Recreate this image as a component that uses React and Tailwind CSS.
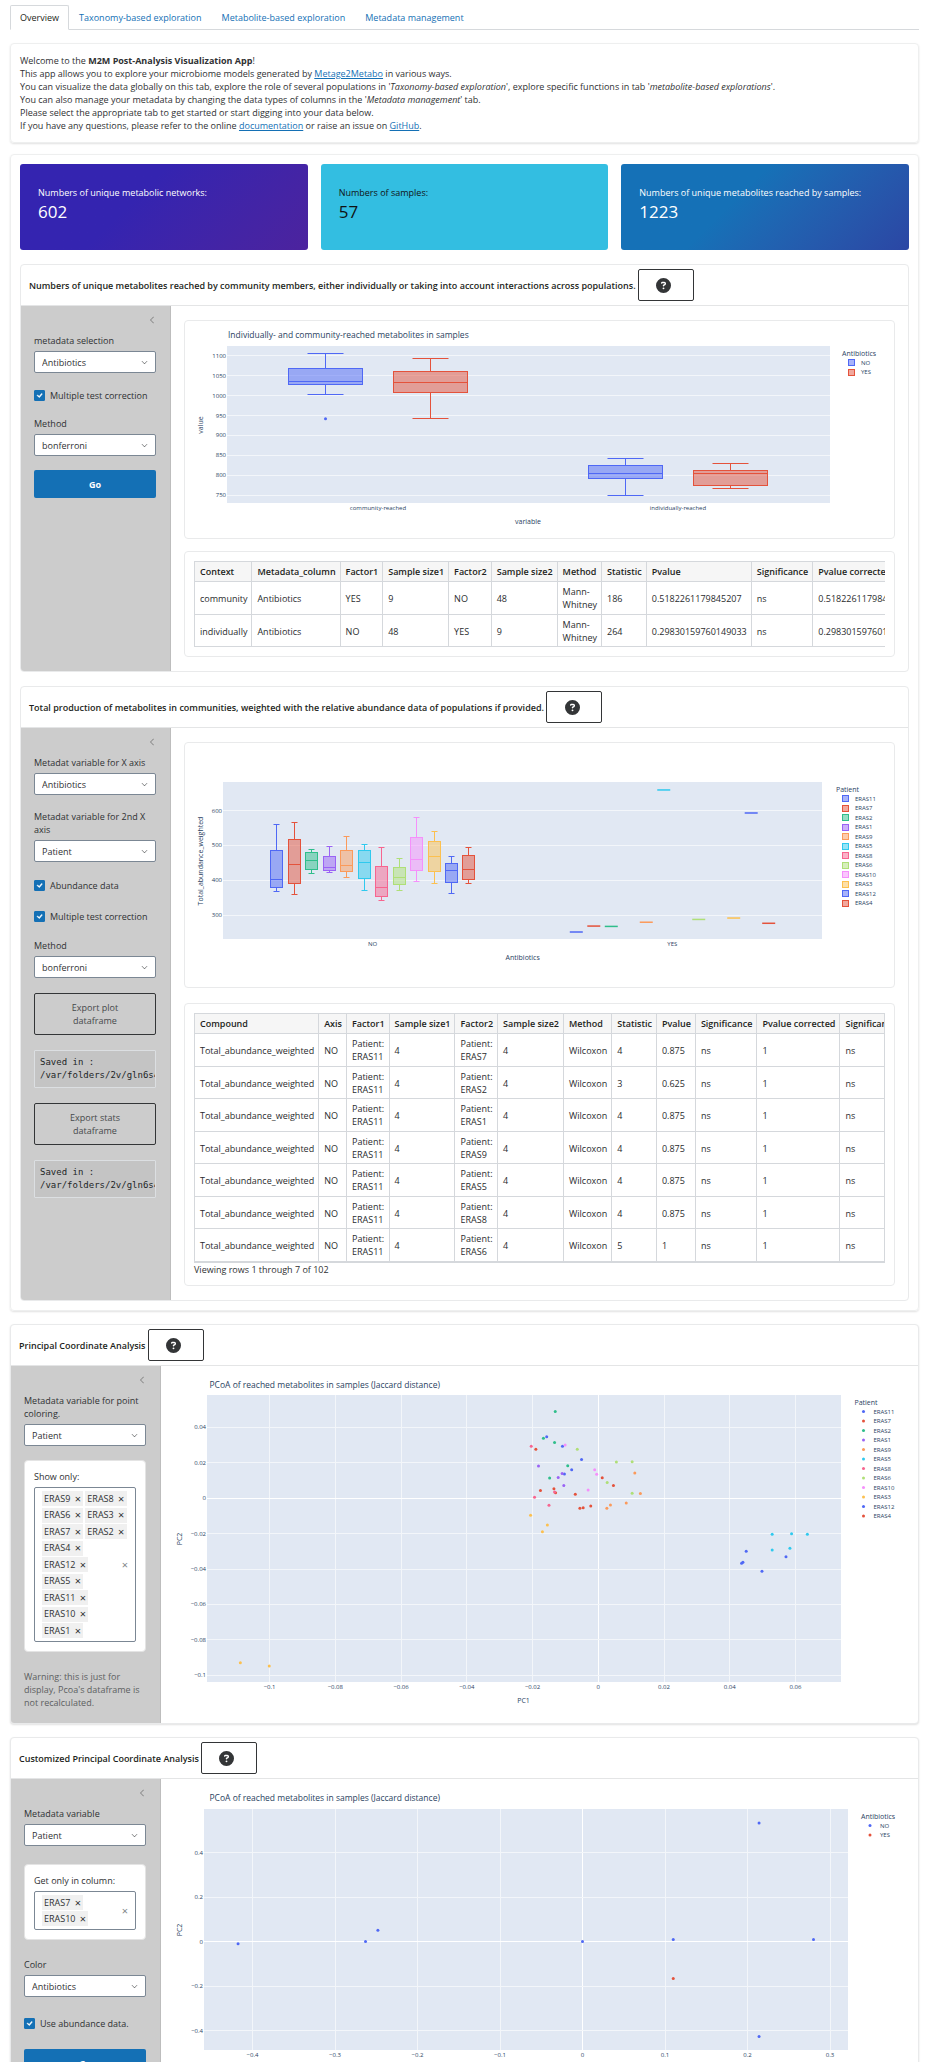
import React from "react";
import { FaCircleQuestion } from "react-icons/fa6";
import { BsChevronLeft, BsChevronDown, BsCheckLg } from "react-icons/bs";

const COLORS = {
  blue: "#4f68f5",
  red: "#e4523b",
  green: "#2fbe8b",
  purple: "#9a63f5",
  orange: "#fb9a5b",
  cyan: "#2fc9ee",
  rose: "#f7658f",
  lime: "#afdf77",
  pink: "#f590fb",
  yellow: "#fcc04f",
};

const PATIENTS = [
  ["ERAS11", COLORS.blue],
  ["ERAS7", COLORS.red],
  ["ERAS2", COLORS.green],
  ["ERAS1", COLORS.purple],
  ["ERAS9", COLORS.orange],
  ["ERAS5", COLORS.cyan],
  ["ERAS8", COLORS.rose],
  ["ERAS6", COLORS.lime],
  ["ERAS10", COLORS.pink],
  ["ERAS3", COLORS.yellow],
  ["ERAS12", COLORS.blue],
  ["ERAS4", COLORS.red],
];

const ANTIBIOTICS = [
  ["NO", COLORS.blue],
  ["YES", COLORS.red],
];

/* ---------- form controls ---------- */

function SelectField({ id, label, options }) {
  return (
    <div className="flex flex-col gap-1">
      <label htmlFor={id}>{label}</label>
      <div className="relative">
        <select
          id={id}
          className="block h-[22px] w-full appearance-none rounded-[2px] border border-[#7b8794] bg-white pl-[7px] pr-5 text-[9px] text-[#2f3133]"
        >
          {options.map((o) => (
            <option key={o}>{o}</option>
          ))}
        </select>
        <BsChevronDown className="pointer-events-none absolute right-2 top-2 size-[7px] text-[#373a3c]" />
      </div>
    </div>
  );
}

function CheckField({ label }) {
  return (
    <label className="flex h-4 items-center gap-[5px]">
      <span className="relative flex size-[11px]">
        <input
          type="checkbox"
          defaultChecked
          className="size-[11px] appearance-none rounded-[1px] border border-[#1470b5] checked:bg-[#1470b5]"
        />
        <BsCheckLg className="pointer-events-none absolute left-[2px] top-[2px] size-[7px] stroke-2 text-white" />
      </span>
      {label}
    </label>
  );
}

function GoButton() {
  return (
    <button className="h-7 w-full shrink-0 rounded-[2px] bg-[#1470b5] font-bold text-white">Go</button>
  );
}

function ExportButton({ children }) {
  return (
    <button className="w-full rounded-[2px] border border-[#333537] px-6 py-[7px] text-[#46494b]">{children}</button>
  );
}

function SavedPath() {
  return (
    <pre className="overflow-hidden rounded-[1px] border border-[#dcdfe2] bg-[#c4c4c4] px-[5px] py-[5px] font-['DejaVu_Sans_Mono','Liberation_Mono',monospace] text-[9px] leading-[13px] text-[#222426]">
      {"Saved in :\n/var/folders/2v/gln6s4w9"}
    </pre>
  );
}

function TokenBox({ label, items, tall }) {
  return (
    <div className="rounded-[4px] border border-[#e4e4e4] bg-white p-[9px]" role="group" aria-label={label}>
      <div className="mb-1">{label}</div>
      <div
        className={
          "relative flex flex-wrap content-between gap-x-[2px] gap-y-px rounded-[2px] border border-[#7b8794] py-[3px] pl-[7px] pr-2 " +
          (tall ? "min-h-[155px]" : "min-h-[39px]")
        }
      >
        {items.map((t) => (
          <span key={t} className="flex h-[15px] items-center gap-[4px] bg-[#f0f0f0] px-[2px] pb-px">
            {t}
            <button aria-label={"Remove " + t} className="w-[7px] text-[11px]">
              ×
            </button>
          </span>
        ))}
        <button aria-label="Clear" className="absolute inset-y-0 right-[7px] text-[11px] text-[#808488]">
          ×
        </button>
      </div>
    </div>
  );
}

/* ---------- layout pieces ---------- */

function SectionCard({ title, gap, controls, children, raised }) {
  return (
    <section
      className={
        "overflow-hidden rounded-[4px] border border-[#e9eaeb] bg-white " +
        (raised ? "shadow-[0_1px_2px_rgba(0,0,0,0.12)]" : "")
      }
    >
      <header className="flex items-center gap-[2px] border-b border-[#e4e5e6] px-2 py-1">
        <h2 className="font-semibold text-[#1d1f21]">{title}</h2>
        <button
          aria-label="Help"
          className="flex h-8 w-14 shrink-0 items-center justify-center rounded-[2px] border border-[#333537] pr-1"
        >
          <FaCircleQuestion className="size-[15px] text-[#333537]" />
        </button>
      </header>
      <div className="flex">
        <aside className="w-[150px] shrink-0 border-r border-[#bdbdbd] bg-[#cccccc] pb-[13px] pl-[13px] pr-[14px]">
          <div className="flex h-7 items-center justify-end">
            <button aria-label="Toggle sidebar">
              <BsChevronLeft className="size-2 text-[#666]" />
            </button>
          </div>
          <div className={"flex flex-col " + gap}>{controls}</div>
        </aside>
        <div className="min-w-0 grow">{children}</div>
      </div>
    </section>
  );
}

function Panel({ children, padded }) {
  return (
    <div className={"rounded-[4px] border border-[#e9eaeb] bg-white " + (padded ? "p-[9px]" : "")}>{children}</div>
  );
}

function ValueBox({ label, value, className }) {
  return (
    <div className={"flex h-[86px] flex-col gap-[2px] rounded-[3px] px-[18px] pt-[22px] " + className}>
      <p className="font-medium">{label}</p>
      <p className="text-[17px] font-medium leading-[22px]">{value}</p>
    </div>
  );
}

/* ---------- charts ---------- */

const crisp = (v) => Math.floor(v) + 0.5;

/* Charts are laid out in layout units; the canvas holds two units per layout unit. */
const K = 2;

function Marks({ children }) {
  return <g transform={`scale(${K})`}>{children}</g>;
}

function Label({ x, y, size = 12, anchor = "start", children, rotate }) {
  return (
    <text
      x={x * K}
      y={y * K}
      fontSize={size}
      textAnchor={anchor}
      dominantBaseline="central"
      transform={rotate ? `rotate(-90 ${x * K} ${y * K})` : undefined}
    >
      {children}
    </text>
  );
}

function Chart({ width, height, label, children }) {
  return (
    <svg
      viewBox={`0 0 ${width * K} ${height * K}`}
      className="block h-auto w-full fill-[#2a3f5f] font-['Open_Sans',sans-serif]"
      role="img"
      aria-label={label}
    >
      {children}
    </svg>
  );
}

function Legend({ x, y, title, items, kind }) {
  return (
    <g>
      <Label x={x} y={y} size={14}>
        {title}
      </Label>
      {items.map(([name, color], i) => {
        const cy = y + 9.6 + i * 9.5;
        return (
          <g key={name}>
            <Marks>
              {kind === "box" ? (
                <rect
                  x={Math.floor(x + 6) + 0.5}
                  y={crisp(cy - 3)}
                  width="6"
                  height="6"
                  fill={color}
                  fillOpacity="0.5"
                  stroke={color}
                />
              ) : (
                <circle cx={x + 9} cy={cy} r="1.5" fill={color} />
              )}
            </Marks>
            <Label x={x + 19} y={cy}>
              {name}
            </Label>
          </g>
        );
      })}
    </g>
  );
}

function Box({ cx, w, cap, color, stats, sy }) {
  const [hi, q3, med, q1, lo] = stats.map((v) => crisp(sy(v)));
  const c = crisp(cx);
  return (
    <g stroke={color} fill="none">
      <line x1={c} x2={c} y1={hi} y2={q3} />
      <line x1={c} x2={c} y1={q1} y2={lo} />
      <line x1={c - cap} x2={c + cap} y1={hi} y2={hi} />
      <line x1={c - cap} x2={c + cap} y1={lo} y2={lo} />
      <rect x={c - w} y={q3} width={w * 2} height={q1 - q3} fill={color} fillOpacity="0.5" />
      <line x1={c - w} x2={c + w} y1={med} y2={med} />
    </g>
  );
}

function ReachedBoxplot() {
  const sy = (v) => 34.6 + (1100 - v) * 0.3994;
  const boxes = [
    [140.5, COLORS.blue, [1105, 1067, 1035, 1028, 1003]],
    [245.5, COLORS.red, [1093, 1061, 1033, 1008, 942]],
    [440.5, COLORS.blue, [843, 826, 806, 793, 750]],
    [545.5, COLORS.red, [831, 813, 804, 775, 767]],
  ];
  const ticks = [750, 800, 850, 900, 950, 1000, 1050, 1100];
  return (
    <Chart width={709} height={217} label="Individually- and community-reached metabolites in samples">
      <Label x={43} y={13.5} size={17}>
        Individually- and community-reached metabolites in samples
      </Label>
      <Marks>
        <rect x="42" y="25" width="603" height="157" fill="#e1e8f3" />
        {ticks.map((v) => (
          <line key={v} x1="42" x2="645" y1={crisp(sy(v))} y2={crisp(sy(v))} stroke="#f3f6fa" />
        ))}
        {boxes.map(([x, color, stats]) => (
          <Box key={x} cx={x} w={37} cap={18} color={color} stats={stats} sy={sy} />
        ))}
        <circle cx="140.5" cy={sy(942)} r="1.5" fill={COLORS.blue} />
      </Marks>
      {ticks.map((v) => (
        <Label key={v} x={41} y={sy(v)} anchor="end">
          {v}
        </Label>
      ))}
      <Label x={193} y={187} anchor="middle">
        community-reached
      </Label>
      <Label x={493} y={187} anchor="middle">
        individually-reached
      </Label>
      <Label x={343} y={200.5} size={14} anchor="middle">
        variable
      </Label>
      <Label x={15} y={104} size={14} anchor="middle" rotate>
        value
      </Label>
      <Legend x={657} y={32} title="Antibiotics" items={ANTIBIOTICS} kind="box" />
    </Chart>
  );
}

const ABUNDANCE_NO = [
  [560, 486, 403, 379, 367],
  [566, 517, 446, 390, 360],
  [489, 480, 458, 432, 419],
  [497, 469, 438, 428, 422],
  [526, 486, 443, 425, 409],
  [503, 485, 451, 404, 371],
  [495, 440, 378, 355, 343],
  [463, 437, 407, 387, 370],
  [580, 522, 460, 427, 397],
  [540, 510, 469, 424, 390],
  [468, 449, 427, 393, 363],
  [494, 470, 431, 403, 390],
];
const ABUNDANCE_YES = [252, 269, 268, null, 280, 659, null, 288, null, 292, 593, 277];

function AbundanceBoxplot() {
  const sy = (v) => 67.5 + (600 - v) * 0.349;
  const ticks = [300, 400, 500, 600];
  return (
    <Chart width={709} height={244} label="Total abundance weighted by antibiotics and patient">
      <Marks>
        <rect x="38" y="39" width="599" height="157" fill="#e1e8f3" />
        {ticks.map((v) => (
          <line key={v} x1="38" x2="637" y1={crisp(sy(v))} y2={crisp(sy(v))} stroke="#f3f6fa" />
        ))}
        {ABUNDANCE_NO.map((stats, i) => (
          <Box key={i} cx={91.6 + i * 17.49} w={6} cap={3} color={PATIENTS[i][1]} stats={stats} sy={sy} />
        ))}
        {ABUNDANCE_YES.map((v, i) =>
          v === null ? null : (
            <rect key={i} x={384.8 + i * 17.49} y={sy(v) - 0.7} width="13" height="1.5" fill={PATIENTS[i][1]} />
          )
        )}
      </Marks>
      {ticks.map((v) => (
        <Label key={v} x={37} y={sy(v)} anchor="end">
          {v}
        </Label>
      ))}
      <Label x={187.7} y={201} anchor="middle">
        NO
      </Label>
      <Label x={487.3} y={201} anchor="middle">
        YES
      </Label>
      <Label x={337.7} y={214.5} size={14} anchor="middle">
        Antibiotics
      </Label>
      <Label x={15} y={118} size={14} anchor="middle" rotate>
        Total_abundance_weighted
      </Label>
      <Legend x={651} y={46} title="Patient" items={PATIENTS} kind="box" />
    </Chart>
  );
}

function Scatter({ height, plot, xticks, yticks, sx, sy, points, legend, yTitleAt, xTitleAt }) {
  const [px, py, pw, ph] = plot;
  const fmt = (v) => String(v).replace("-", "−");
  const grid = (v) => (v === 0 ? "#ffffff" : "#f3f6fa");
  return (
    <Chart width={757} height={height} label="PCoA of reached metabolites in samples">
      <Label x={48.5} y={18.5} size={17}>
        PCoA of reached metabolites in samples (Jaccard distance)
      </Label>
      <Marks>
        <rect x={px} y={py} width={pw} height={ph} fill="#e1e8f3" />
        {xticks.map((v) => (
          <line key={v} x1={crisp(sx(v))} x2={crisp(sx(v))} y1={py} y2={py + ph} stroke={grid(v)} />
        ))}
        {yticks.map((v) => (
          <line key={v} x1={px} x2={px + pw} y1={crisp(sy(v))} y2={crisp(sy(v))} stroke={grid(v)} />
        ))}
        {points.map(([color, list]) =>
          list.map(([x, y]) => <circle key={x + "/" + y} cx={sx(x)} cy={sy(y)} r="1.5" fill={color} />)
        )}
      </Marks>
      {xticks.map((v) => (
        <Label key={v} x={sx(v)} y={py + ph + 4.5} anchor="middle">
          {fmt(v)}
        </Label>
      ))}
      {yticks.map((v) => (
        <Label key={v} x={px - 1} y={sy(v)} anchor="end">
          {fmt(v)}
        </Label>
      ))}
      <Label x={362.5} y={xTitleAt} size={14} anchor="middle">
        PC1
      </Label>
      <Label x={18} y={yTitleAt} size={14} anchor="middle" rotate>
        PC2
      </Label>
      {legend}
    </Chart>
  );
}

/* coordinates in thousandths */
const PCOA_POINTS = [
  [COLORS.green, [[-13.1, 49], [-16.7, 33.8], [-13.3, 31.5], [-9.3, 18.3], [-14.8, 11.4]]],
  [COLORS.blue, [[-15.7, 34.7], [-10.9, 29.3], [-5.1, 21.9], [-8.1, 16.1], [-10.3, 13.7], [45, -30], [57.1, -33.1], [44, -36.2], [43.6, -36.8], [49.8, -41.3]]],
  [COLORS.pink, [[-10.1, 30], [-1.1, 16.1], [-0.5, 13.5], [-3.1, 4.6]]],
  [COLORS.red, [[-19, 27.6], [-17.6, 4.3], [-13.5, 5.4], [-13, 3.1], [-7, 2.2], [-5.6, -5.7], [-4.6, -5.4], [-2.3, -4.4], [1.2, 11.6], [4.6, 7.2]]],
  [COLORS.rose, [[-20.4, 29.3], [-19.4, 0.5], [-13.3, 3.5], [-15, -4]]],
  [COLORS.purple, [[-18.2, 18.2], [-11, 13.9], [-12.2, 11.7], [-10.5, 7.2]]],
  [COLORS.lime, [[-6.4, 27.7], [5.5, 20.4], [10.3, 20.6], [2.7, 8.8], [10.3, 2.8]]],
  [COLORS.orange, [[11.1, 14.2], [12.8, 2.6], [8.5, -2.7], [3.7, -3.9], [2.6, -5.7]]],
  [COLORS.yellow, [[-20.6, -9.6], [-15.5, -15.1], [-17, -18.9], [-108.9, -92.9], [-100.1, -94.8]]],
  [COLORS.cyan, [[52.9, -20.4], [58.8, -20.1], [63.6, -20.4], [58.3, -28.3], [52.9, -29.2]]],
];

function PcoaChart() {
  return (
    <Scatter
      height={357}
      plot={[46, 29, 634, 287]}
      xticks={[-0.1, -0.08, -0.06, -0.04, -0.02, 0, 0.02, 0.04, 0.06]}
      yticks={[0.04, 0.02, 0, -0.02, -0.04, -0.06, -0.08, -0.1]}
      sx={(v) => 437.3 + v * 3287}
      sy={(v) => 132.2 - v * 1771}
      points={PCOA_POINTS.map(([c, l]) => [c, l.map(([x, y]) => [x / 1000, y / 1000])])}
      xTitleAt={334.5}
      yTitleAt={173}
      legend={<Legend x={693.5} y={36} title="Patient" items={PATIENTS} kind="dot" />}
    />
  );
}

function CustomPcoaChart() {
  return (
    <Scatter
      height={320}
      plot={[43, 30, 644, 241]}
      xticks={[-0.4, -0.3, -0.2, -0.1, 0, 0.1, 0.2, 0.3]}
      yticks={[0.4, 0.2, 0, -0.2, -0.4]}
      sx={(v) => 421.5 + v * 825}
      sy={(v) => 162.5 - v * 222.5}
      points={[
        [COLORS.blue, [[-0.4175, -0.01], [-0.263, 0], [-0.248, 0.051], [0, 0], [0.11, 0.009], [0.28, 0.009], [0.214, 0.533], [0.214, -0.427]]],
        [COLORS.red, [[0.11, -0.166]]],
      ]}
      xTitleAt={290}
      yTitleAt={151}
      legend={<Legend x={700} y={37} title="Antibiotics" items={ANTIBIOTICS} kind="dot" />}
    />
  );
}

/* ---------- tables ---------- */

function DataTable({ head, rows }) {
  return (
    <table className="w-max border-collapse whitespace-nowrap text-[#2a2c2e]">
      <thead>
        <tr>
          {head.map((h) => (
            <th
              key={h}
              scope="col"
              className="border border-[#d5d8dc] bg-[#f6f6f6] py-[3px] pl-[5px] pr-1 text-left font-semibold text-[#1d1f21]"
            >
              {h}
            </th>
          ))}
        </tr>
      </thead>
      <tbody>
        {rows.map((row, i) => (
          <tr key={i} className="odd:[&>td]:pb-[3px] even:[&>td]:pb-[2px]">
            {row.map((c, j) => (
              <td key={j} className="whitespace-pre-line border border-[#d5d8dc] pl-[5px] pr-1 pt-[3px]">
                {c}
              </td>
            ))}
          </tr>
        ))}
      </tbody>
    </table>
  );
}

const REACHED_HEAD = ["Context", "Metadata_column", "Factor1", "Sample size1", "Factor2", "Sample size2", "Method", "Statistic", "Pvalue", "Significance", "Pvalue corrected"];
const REACHED_ROWS = [
  ["community", "Antibiotics", "YES", "9", "NO", "48", "Mann-\nWhitney", "186", "0.5182261179845207", "ns", "0.5182261179845207"],
  ["individually", "Antibiotics", "NO", "48", "YES", "9", "Mann-\nWhitney", "264", "0.29830159760149033", "ns", "0.29830159760149033"],
];

const TOTAL_HEAD = ["Compound", "Axis", "Factor1", "Sample size1", "Factor2", "Sample size2", "Method", "Statistic", "Pvalue", "Significance", "Pvalue corrected", "Significance corrected"];
const TOTAL_ROWS = [
  ["ERAS7", "4", "0.875"],
  ["ERAS2", "3", "0.625"],
  ["ERAS1", "4", "0.875"],
  ["ERAS9", "4", "0.875"],
  ["ERAS5", "4", "0.875"],
  ["ERAS8", "4", "0.875"],
  ["ERAS6", "5", "1"],
  ["", "", ""],
].map(([patient, stat, p]) =>
  patient
    ? ["Total_abundance_weighted", "NO", "Patient:\nERAS11", "4", "Patient:\n" + patient, "4", "Wilcoxon", stat, p, "ns", "1", "ns"]
    : Array(12).fill("")
);

/* ---------- page ---------- */

function Link({ children }) {
  return (
    <a href="#" className="text-[#1470b5] underline">
      {children}
    </a>
  );
}

const TABS = ["Overview", "Taxonomy-based exploration", "Metabolite-based exploration", "Metadata management"];

export default function App() {
  return (
    <div className="h-screen overflow-hidden bg-white px-[10px] pt-[5px] font-['Open_Sans',sans-serif] text-[9px] leading-[13px] text-[#2f3133]">
      <nav className="flex border-b border-[#d6d9dc]">
        {TABS.map((t, i) => (
          <a
            key={t}
            href="#"
            className={
              "-mb-px rounded-t-[2px] border px-[9px] py-[5px] " +
              (i === 0 ? "border-[#d6d9dc] border-b-white text-[#1d1f21]" : "border-transparent text-[#1470b5]")
            }
          >
            {t}
          </a>
        ))}
      </nav>

      <section className="mt-[13px] rounded-[4px] border border-[#eeefef] px-[9px] py-[10px] shadow-[0_1px_2px_rgba(0,0,0,0.12)]">
        <p>
          Welcome to the <b className="font-bold">M2M Post-Analysis Visualization App</b>!
        </p>
        <p>
          This app allows you to explore your microbiome models generated by <Link>Metage2Metabo</Link> in various ways.
        </p>
        <p>
          You can visualize the data globally on this tab, explore the role of several populations in '
          <i>Taxonomy-based exploration</i>', explore specific functions in tab '<i>metabolite-based explorations</i>'.
        </p>
        <p>
          You can also manage your metadata by changing the data types of columns in the '<i>Metadata management</i>' tab.
        </p>
        <p>Please select the appropriate tab to get started or start digging into your data below.</p>
        <p>
          If you have any questions, please refer to the online <Link>documentation</Link> or raise an issue on{" "}
          <Link>GitHub</Link>.
        </p>
      </section>

      <main className="mt-[11px] flex flex-col gap-[13px]">
        <div className="flex flex-col gap-[14px] rounded-[4px] border border-[#eeefef] p-[9px] shadow-[0_1px_2px_rgba(0,0,0,0.12)]">
          <div className="grid grid-cols-3 gap-[13px]">
            <ValueBox
              label="Numbers of unique metabolic networks:"
              value="602"
              className="bg-linear-135 from-[#3424b0] from-40% to-[#4c239e] text-white"
            />
            <ValueBox label="Numbers of samples:" value="57" className="bg-[#33bee1] text-[#101214]" />
            <ValueBox
              label="Numbers of unique metabolites reached by samples:"
              value="1223"
              className="bg-linear-135 from-[#1571b7] from-40% to-[#2b46a4] text-white"
            />
          </div>

          <SectionCard
            title="Numbers of unique metabolites reached by community members, either individually or taking into account interactions across populations."
            gap="gap-[14px]"
            controls={
              <>
                <SelectField id="reached-meta" label="metadata selection" options={["Antibiotics", "Patient"]} />
                <CheckField label="Multiple test correction" />
                <SelectField id="reached-method" label="Method" options={["bonferroni"]} />
                <GoButton />
              </>
            }
          >
            <div className="flex flex-col gap-3 px-[13px] py-[14px]">
              <Panel>
                <ReachedBoxplot />
              </Panel>
              <Panel padded>
                <div className="overflow-hidden">
                  <DataTable head={REACHED_HEAD} rows={REACHED_ROWS} />
                </div>
              </Panel>
            </div>
          </SectionCard>

          <SectionCard
            title="Total production of metabolites in communities, weighted with the relative abundance data of populations if provided."
            gap="gap-[15px]"
            controls={
              <>
                <SelectField id="total-x" label="Metadat variable for X axis" options={["Antibiotics", "Patient"]} />
                <SelectField id="total-x2" label="Metadat variable for 2nd X axis" options={["Patient", "Antibiotics"]} />
                <CheckField label="Abundance data" />
                <CheckField label="Multiple test correction" />
                <SelectField id="total-method" label="Method" options={["bonferroni"]} />
                <ExportButton>Export plot dataframe</ExportButton>
                <SavedPath />
                <ExportButton>Export stats dataframe</ExportButton>
                <SavedPath />
              </>
            }
          >
            <div className="flex flex-col gap-[15px] px-[13px] py-[14px]">
              <Panel>
                <AbundanceBoxplot />
              </Panel>
              <Panel padded>
                <div className="h-[250px] overflow-hidden border-b border-r border-[#d5d8dc]">
                  <DataTable head={TOTAL_HEAD} rows={TOTAL_ROWS} />
                </div>
                <p>Viewing rows 1 through 7 of 102</p>
              </Panel>
            </div>
          </SectionCard>
        </div>

        <SectionCard
          raised
          title="Principal Coordinate Analysis"
          gap="gap-[14px]"
          controls={
            <>
              <SelectField id="pcoa-color" label="Metadata variable for point coloring." options={["Patient", "Antibiotics"]} />
              <TokenBox
                tall
                label="Show only:"
                items={["ERAS9", "ERAS8", "ERAS6", "ERAS3", "ERAS7", "ERAS2", "ERAS4", "ERAS12", "ERAS5", "ERAS11", "ERAS10", "ERAS1"]}
              />
              <p className="pt-1 text-[#5c5f61]">Warning: this is just for display, Pcoa's dataframe is not recalculated.</p>
            </>
          }
        >
          <PcoaChart />
        </SectionCard>

        <SectionCard
          raised
          title="Customized Principal Coordinate Analysis"
          gap="gap-[18px]"
          controls={
            <>
              <SelectField id="custom-meta" label="Metadata variable" options={["Patient", "Antibiotics"]} />
              <TokenBox label="Get only in column:" items={["ERAS7", "ERAS10"]} />
              <SelectField id="custom-color" label="Color" options={["Antibiotics", "Patient"]} />
              <CheckField label="Use abundance data." />
              <GoButton />
            </>
          }
        >
          <CustomPcoaChart />
        </SectionCard>
      </main>
    </div>
  );
}
